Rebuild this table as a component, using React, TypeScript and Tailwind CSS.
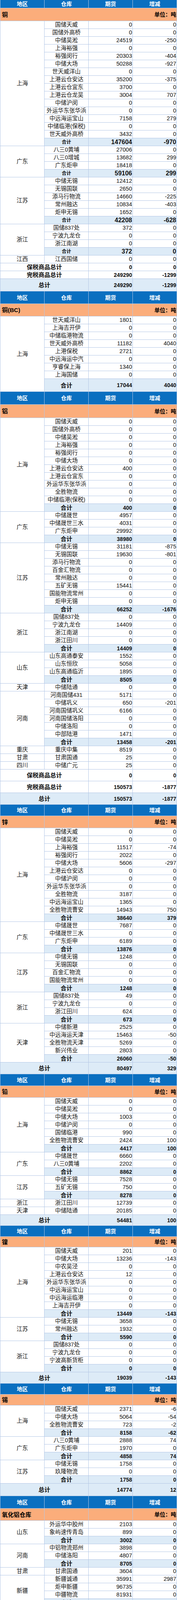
import { Fragment } from "react";
import clsx from "clsx";

type Item = [string, string, string];
type Group = { region: string; rows: Item[]; sum?: [string, string] };
type Total = { label: string; qty: string; chg: string; h: number; blue?: boolean };
type Section = {
  title: string;
  store: string;
  merged: boolean;
  headerH: number;
  orangeH: number;
  sumH?: number;
  smallSum?: boolean;
  groups: Group[];
  totals: Total[];
};

const H: Record<number, string> = {
  19: "h-[19px]",
  20: "h-[20px]",
  26: "h-[26px]",
  27: "h-[27px]",
  28: "h-[28px]",
  29: "h-[29px]",
  30: "h-[30px]",
  31: "h-[31px]",
  32: "h-[32px]",
  33: "h-[33px]",
  34: "h-[34px]",
};

const SPAN: Record<number, string> = {
  1: "row-span-1",
  2: "row-span-2",
  3: "row-span-3",
  4: "row-span-4",
  5: "row-span-5",
  6: "row-span-6",
  7: "row-span-7",
  8: "row-span-8",
  9: "row-span-9",
  10: "row-span-10",
  11: "row-span-11",
  12: "row-span-12",
  13: "row-span-13",
  14: "row-span-14",
  15: "row-span-15",
  16: "row-span-16",
};

const SECTIONS: Section[] = [
  {
    title: "铜",
    store: "仓库",
    merged: true,
    headerH: 20,
    orangeH: 32,
    sumH: 19,
    smallSum: true,
    groups: [
      {
        region: "上海",
        rows: [
          ["国储天威", "0", "0"],
          ["国储外高桥", "0", "0"],
          ["中储吴淞", "24519", "-250"],
          ["上海裕强", "0", "0"],
          ["裕强闵行", "20303", "-404"],
          ["中储大场", "50288", "-927"],
          ["世天威洋山", "0", "0"],
          ["上港云仓安达", "35200", "-375"],
          ["上港云仓宜东", "3700", "0"],
          ["上港云仓龙吴", "3004", "707"],
          ["中储沪闵", "0", "0"],
          ["外运华东张华浜", "0", "0"],
          ["中远海运宝山", "7158", "279"],
          ["中储临港(保税)", "0", "0"],
          ["世天威外高桥", "3432", "0"],
        ],
        sum: ["147604", "-970"],
      },
      {
        region: "广东",
        rows: [
          ["八三0黄埔", "27006", "0"],
          ["八三0增城", "13682", "299"],
          ["广东炬申", "18418", "0"],
        ],
        sum: ["59106", "299"],
      },
      {
        region: "江苏",
        rows: [
          ["中储无锡", "12412", "0"],
          ["无锡国联", "2650", "0"],
          ["添马行物流", "14660", "-225"],
          ["常州融达", "10834", "-403"],
          ["炬申无锡", "1652", "0"],
        ],
        sum: ["42208", "-628"],
      },
      {
        region: "浙江",
        rows: [
          ["国储837处", "372", "0"],
          ["宁波九龙仓", "0", "0"],
          ["浙江南湖", "0", "0"],
        ],
        sum: ["372", "0"],
      },
      { region: "江西", rows: [["江西国储", "0", "0"]] },
    ],
    totals: [
      { label: "保税商品总计", qty: "0", chg: "0", h: 19 },
      { label: "完税商品总计", qty: "249290", chg: "-1299", h: 19 },
      { label: "总计", qty: "249290", chg: "-1299", h: 31, blue: true },
    ],
  },
  {
    title: "铜(BC)",
    store: "仓库",
    merged: false,
    headerH: 31,
    orangeH: 31,
    sumH: 32,
    groups: [
      {
        region: "上海",
        rows: [
          ["世天威洋山", "1801", "0"],
          ["上海吉开伊", "0", "0"],
          ["中储临港物流", "0", "0"],
          ["世天威外高桥", "11182", "4040"],
          ["上港保税", "2721", "0"],
          ["中远海运中汽", "0", "0"],
          ["亨睿保上海", "1340", "0"],
          ["上海国储", "0", "0"],
        ],
        sum: ["17044", "4040"],
      },
    ],
    totals: [],
  },
  {
    title: "铝",
    store: "仓库",
    merged: false,
    headerH: 32,
    orangeH: 33,
    groups: [
      {
        region: "上海",
        rows: [
          ["国储天威", "0", "0"],
          ["国储外高桥", "0", "0"],
          ["中储吴淞", "0", "0"],
          ["上海裕强", "0", "0"],
          ["裕强闵行", "0", "0"],
          ["中储大场", "0", "0"],
          ["上港云仓安达", "400", "0"],
          ["上港云仓宜东", "0", "0"],
          ["外运华东张华浜", "0", "0"],
          ["全胜物流", "0", "0"],
          ["中储临港(保税)", "0", "0"],
        ],
        sum: ["400", "0"],
      },
      {
        region: "广东",
        rows: [
          ["中储晟世", "4957", "0"],
          ["中储晟世三水", "4031", "0"],
          ["广东炬申", "29992", "0"],
        ],
        sum: ["38980", "0"],
      },
      {
        region: "江苏",
        rows: [
          ["中储无锡", "31181", "-875"],
          ["无锡国联", "19630", "-801"],
          ["添马行物流", "0", "0"],
          ["百金汇物流", "0", "0"],
          ["常州融达", "0", "0"],
          ["五矿无锡", "15441", "0"],
          ["国能物流常州", "0", "0"],
          ["炬申无锡", "0", "0"],
        ],
        sum: ["66252", "-1676"],
      },
      {
        region: "浙江",
        rows: [
          ["国储837处", "0", "0"],
          ["宁波九龙仓", "14409", "0"],
          ["浙江南湖", "0", "0"],
          ["浙江田川", "0", "0"],
        ],
        sum: ["14409", "0"],
      },
      {
        region: "山东",
        rows: [
          ["山东高通泰安", "1552", "0"],
          ["山东恒欣", "5058", "0"],
          ["山东高通临沂", "1895", "0"],
        ],
        sum: ["8505", "0"],
      },
      { region: "天津", rows: [["中储陆通", "0", "0"]] },
      {
        region: "河南",
        rows: [
          ["河南国储431", "5171", "0"],
          ["中储巩义", "650", "-201"],
          ["河南国储巩义", "6166", "0"],
          ["河南国储洛阳", "0", "0"],
          ["中储洛阳", "0", "0"],
          ["中部陆港", "1471", "0"],
        ],
        sum: ["13458", "-201"],
      },
      { region: "重庆", rows: [["重庆中集", "8519", "0"]] },
      { region: "甘肃", rows: [["甘肃国通", "25", "0"]] },
      { region: "四川", rows: [["中储广元", "25", "0"]] },
    ],
    totals: [
      { label: "保税商品总计", qty: "0", chg: "0", h: 29 },
      { label: "完税商品总计", qty: "150573", chg: "-1877", h: 29 },
      { label: "总计", qty: "150573", chg: "-1877", h: 29, blue: true },
    ],
  },
  {
    title: "锌",
    store: "仓库",
    merged: false,
    headerH: 28,
    orangeH: 30,
    groups: [
      {
        region: "上海",
        rows: [
          ["国储天威", "0", "0"],
          ["中储吴淞", "0", "0"],
          ["上海裕强", "11517", "-74"],
          ["裕强闵行", "2022", "0"],
          ["中储大场", "5606", "-297"],
          ["上港云仓安达", "0", "0"],
          ["中储沪闵", "0", "0"],
          ["外运华东张华浜", "0", "0"],
          ["全胜物流", "3187", "0"],
          ["中远海运宝山", "1365", "0"],
          ["全胜物流曹安", "14943", "750"],
        ],
        sum: ["38640", "379"],
      },
      {
        region: "广东",
        rows: [
          ["中储晟世", "7687", "0"],
          ["中储晟世三水", "0", "0"],
          ["广东炬申", "6189", "0"],
        ],
        sum: ["13876", "0"],
      },
      {
        region: "江苏",
        rows: [
          ["中储无锡", "1248", "0"],
          ["无锡国联", "0", "0"],
          ["百金汇物流", "0", "0"],
          ["国能物流常州", "0", "0"],
        ],
        sum: ["1248", "0"],
      },
      {
        region: "浙江",
        rows: [
          ["国储837处", "49", "0"],
          ["宁波九龙仓", "0", "0"],
          ["浙江田川", "624", "0"],
        ],
        sum: ["673", "0"],
      },
      {
        region: "天津",
        rows: [
          ["中储新港", "2525", "0"],
          ["中远海运天津", "15463", "-50"],
          ["全胜物流天津", "5269", "0"],
          ["新兴伟业", "2803", "0"],
        ],
        sum: ["26060", "-50"],
      },
    ],
    totals: [{ label: "总计", qty: "80497", chg: "329", h: 29, blue: true }],
  },
  {
    title: "铅",
    store: "仓库",
    merged: false,
    headerH: 29,
    orangeH: 29,
    groups: [
      {
        region: "上海",
        rows: [
          ["国储天威", "0", "0"],
          ["中储吴淞", "0", "0"],
          ["中储大场", "1003", "0"],
          ["中储沪闵", "0", "0"],
          ["国储临港", "990", "0"],
          ["全胜物流曹安", "2424", "100"],
        ],
        sum: ["4417", "100"],
      },
      {
        region: "广东",
        rows: [
          ["中储晟世", "6660", "0"],
          ["八三0黄埔", "2202", "0"],
        ],
        sum: ["8862", "0"],
      },
      {
        region: "江苏",
        rows: [
          ["中储无锡", "7528", "0"],
          ["五矿无锡", "750", "0"],
        ],
        sum: ["8278", "0"],
      },
      { region: "浙江", rows: [["浙江田川", "12739", "0"]] },
      { region: "天津", rows: [["中储陆通", "20185", "0"]] },
    ],
    totals: [{ label: "总计", qty: "54481", chg: "100", h: 27, blue: true }],
  },
  {
    title: "镍",
    store: "仓库",
    merged: false,
    headerH: 27,
    orangeH: 26,
    groups: [
      {
        region: "上海",
        rows: [
          ["国储天威", "201", "0"],
          ["中储大场", "13236", "-143"],
          ["中农吴泾", "0", "0"],
          ["上港云仓安达", "12", "0"],
          ["外运华东张华浜", "0", "0"],
          ["中远海运宝山", "0", "0"],
          ["中远海运临港", "0", "0"],
          ["上海吉开伊", "0", "0"],
        ],
        sum: ["13449", "-143"],
      },
      {
        region: "江苏",
        rows: [
          ["中储无锡", "3658", "0"],
          ["常州融达", "1932", "0"],
        ],
        sum: ["5590", "0"],
      },
      {
        region: "浙江",
        rows: [
          ["国储837处", "0", "0"],
          ["宁波九龙仓", "0", "0"],
          ["宁波高新货柜", "0", "0"],
        ],
        sum: ["0", "0"],
      },
    ],
    totals: [{ label: "总计", qty: "19039", chg: "-143", h: 28, blue: true }],
  },
  {
    title: "锡",
    store: "仓库",
    merged: false,
    headerH: 27,
    orangeH: 27,
    groups: [
      {
        region: "上海",
        rows: [
          ["国储天威", "2371", "-6"],
          ["中储大场", "5064", "-54"],
          ["全胜物流曹安", "723", "-2"],
        ],
        sum: ["8158", "-62"],
      },
      {
        region: "广东",
        rows: [
          ["八三0黄埔", "2888", "74"],
          ["广东炬申", "1970", "0"],
        ],
        sum: ["4858", "74"],
      },
      {
        region: "江苏",
        rows: [
          ["中储无锡", "1758", "0"],
          ["玖隆物流", "0", "0"],
        ],
        sum: ["1758", "0"],
      },
    ],
    totals: [{ label: "总计", qty: "14774", chg: "12", h: 31, blue: true }],
  },
  {
    title: "氧化铝仓库",
    store: "仓库",
    merged: false,
    headerH: 31,
    orangeH: 30,
    groups: [
      {
        region: "山东",
        rows: [
          ["外运华中胶州", "2103", "0"],
          ["象屿速传青岛", "899", "0"],
        ],
        sum: ["3002", "0"],
      },
      {
        region: "河南",
        rows: [
          ["中铝物流郑州", "3898", "0"],
          ["中储洛阳", "4807", "0"],
        ],
        sum: ["8705", "0"],
      },
      { region: "甘肃", rows: [["甘肃国通", "3604", "0"]] },
      {
        region: "新疆",
        rows: [
          ["新疆诚通", "35991", "2987"],
          ["炬申新疆", "96735", "0"],
          ["中疆物流", "81931", "0"],
        ],
        sum: ["214657", "2987"],
      },
    ],
    totals: [{ label: "总计", qty: "229968", chg: "2987", h: 33, blue: true }],
  },
  {
    title: "氧化铝厂库",
    store: "厂库",
    merged: true,
    headerH: 33,
    orangeH: 34,
    groups: [
      {
        region: "山东",
        rows: [
          ["中铝山东", "4500", "0"],
          ["山东宏拓", "0", "0"],
        ],
        sum: ["4500", "0"],
      },
      { region: "河南", rows: [["中州铝业", "9000", "0"]] },
    ],
    totals: [{ label: "总计", qty: "13500", chg: "0", h: 30, blue: true }],
  },
];

const ORANGE = "bg-[#fbad7b]";
const SUMBG = "bg-[#ddebf7]";

function SectionRows({ s }: { s: Section }) {
  const sumH = H[s.sumH ?? 19];
  return (
    <>
      {["地区", s.store, "期货", "增减"].map((h) => (
        <div
          key={h}
          className={clsx(
            H[s.headerH],
            "flex items-center justify-center bg-[#0a6fc0] text-[14px] font-bold text-white"
          )}
        >
          {h}
        </div>
      ))}

      {s.merged ? (
        <div className={clsx(H[s.orangeH], ORANGE, "col-span-4 flex items-center justify-between pl-[4px] pr-px text-[14px] font-bold text-black")}>
          <span className="text-[15px]">{s.title}</span>
          <span>{s.title === "铜" ? "单位：吨" : "单位:吨"}</span>
        </div>
      ) : (
        <>
          <div className={clsx(H[s.orangeH], ORANGE, "flex items-center pl-[4px] text-[15px] font-bold text-black whitespace-nowrap")}>
            {s.title}
          </div>
          <div className={clsx(H[s.orangeH], ORANGE)} />
          <div className={clsx(H[s.orangeH], ORANGE)} />
          <div className={clsx(H[s.orangeH], ORANGE, "flex items-center justify-end pr-px text-[14px] font-bold text-black")}>
            单位：吨
          </div>
        </>
      )}

      {s.groups.map((g) => {
        const span = g.rows.length + (g.sum ? 1 : 0);
        return (
          <Fragment key={g.region}>
            <div className={clsx(SPAN[span], "flex items-center justify-center bg-white text-[14.5px] text-[#111]")}>
              {g.region}
            </div>
            {g.rows.map(([name, qty, chg], i) => (
              <Fragment key={name + i}>
                <div className="flex h-[19px] items-center justify-center bg-white text-[14.5px] whitespace-nowrap text-[#111]">
                  {name}
                </div>
                <div className="flex h-[19px] items-center justify-end bg-white pr-px text-[14.5px] text-[#111]">
                  {qty}
                </div>
                <div className="flex h-[19px] items-center justify-end bg-white pr-px text-[14.5px] text-[#111]">
                  {chg}
                </div>
              </Fragment>
            ))}
            {g.sum && (
              <>
                <div
                  className={clsx(
                    sumH,
                    SUMBG,
                    "flex items-center justify-center font-bold text-[#111]",
                    s.smallSum ? "text-[12px]" : "text-[15px]"
                  )}
                >
                  合计
                </div>
                <div
                  className={clsx(
                    sumH,
                    SUMBG,
                    "flex items-center justify-end pr-px font-bold text-[#111]",
                    s.smallSum ? "text-[16px]" : "text-[14px]"
                  )}
                >
                  {g.sum[0]}
                </div>
                <div
                  className={clsx(
                    sumH,
                    SUMBG,
                    "flex items-center justify-end pr-px font-bold text-[#111]",
                    s.smallSum ? "text-[16px]" : "text-[14px]"
                  )}
                >
                  {g.sum[1]}
                </div>
              </>
            )}
          </Fragment>
        );
      })}

      {s.totals.map((t) => {
        const bg = t.blue ? SUMBG : "bg-white";
        return (
          <Fragment key={t.label}>
            <div className={clsx(H[t.h], bg, "col-span-2 flex items-center justify-center text-[15px] font-bold text-[#111]")}>
              {t.label}
            </div>
            <div className={clsx(H[t.h], bg, "flex items-center justify-end pr-px text-[14px] font-bold text-[#111]")}>
              {t.qty}
            </div>
            <div className={clsx(H[t.h], bg, "flex items-center justify-end pr-px text-[14px] font-bold text-[#111]")}>
              {t.chg}
            </div>
          </Fragment>
        );
      })}
    </>
  );
}

export default function App() {
  return (
    <div className="w-[453px] bg-white font-['Liberation_Sans','Noto_Sans_CJK_SC',sans-serif] leading-none">
      <div className="grid grid-cols-[112px_112px_112px_112px] gap-px bg-[#b3c7e6] px-px pb-px">
        {SECTIONS.map((s) => (
          <SectionRows key={s.title} s={s} />
        ))}
      </div>
    </div>
  );
}
